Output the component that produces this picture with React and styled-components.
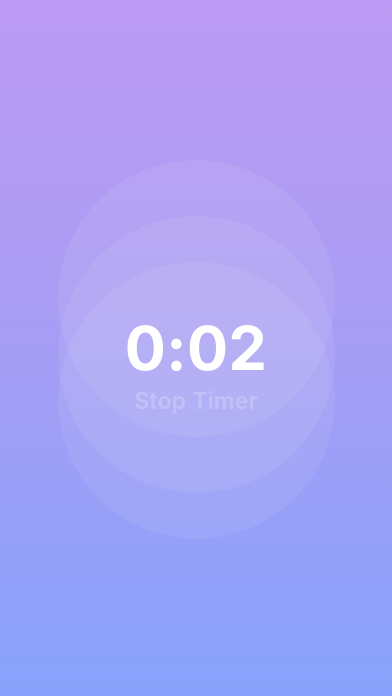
import React from "react";
import styled, { createGlobalStyle } from "styled-components";

const GlobalStyle = createGlobalStyle`
  html, body, #root {
    margin: 0;
    padding: 0;
    height: 100%;
  }
  body {
    font-family: Inter, "Noto Sans", "Liberation Sans", sans-serif;
  }
`;

const Page = styled.div`
  height: 100vh;
  display: grid;
  place-items: center;
  background: linear-gradient(180deg, #bc9af3 0%, #a99df4 45%, #87a2fb 100%);
  overflow: hidden;
`;

const Stage = styled.div`
  display: grid;
  place-items: center;
  & > * {
    grid-area: 1 / 1;
  }
`;

const Ring = styled.div`
  width: 277px;
  height: 277px;
  border-radius: 50%;
  background: rgba(255, 255, 255, 0.07);
  transform: translateY(${(p) => p.$shift}px);
`;

const Readout = styled.div`
  display: flex;
  flex-direction: column;
  align-items: center;
  padding-top: 36px;
`;

const Time = styled.div`
  font-size: 61px;
  font-weight: 700;
  line-height: 62px;
  color: #fff;
  letter-spacing: 0.3px;
`;

const StopButton = styled.button`
  margin-top: 8px;
  border: none;
  background: none;
  padding: 0;
  font-family: inherit;
  font-size: 23px;
  font-weight: 600;
  letter-spacing: 0.2px;
  color: rgba(255, 255, 255, 0.22);
  cursor: pointer;
`;

const rings = [-50, 6, 52];

export default function App() {
  return (
    <>
      <GlobalStyle />
      <Page>
        <Stage>
          {rings.map((s) => (
            <Ring key={s} $shift={s} />
          ))}
          <Readout>
            <Time>0:02</Time>
            <StopButton>Stop Timer</StopButton>
          </Readout>
        </Stage>
      </Page>
    </>
  );
}
